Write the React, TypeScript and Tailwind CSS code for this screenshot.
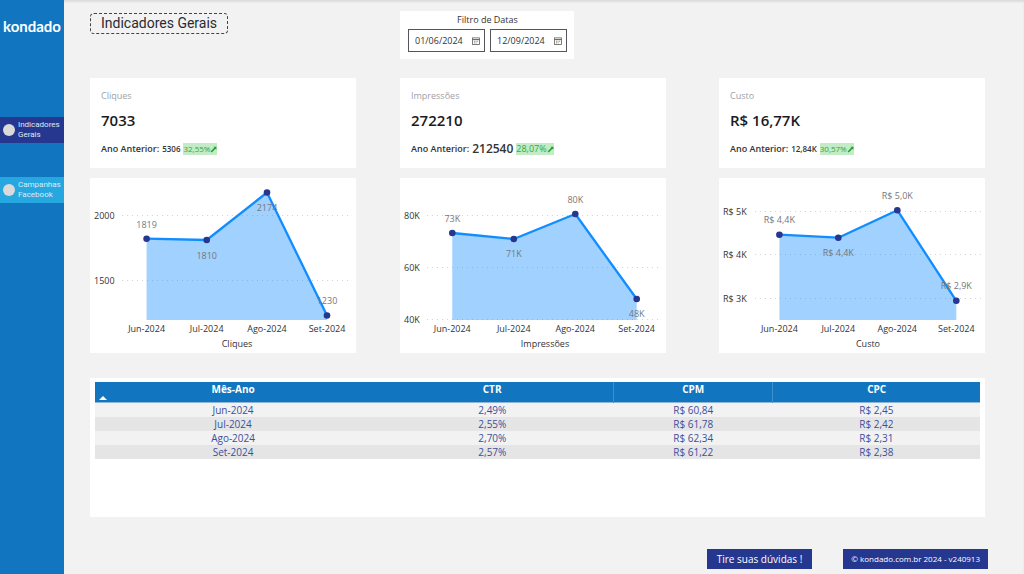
import React, { useState } from 'react';

interface Point {
  month: string;
  label: string;
  x: number;
  y: number;
  labelY: number;
}

interface Tick {
  label: string;
  y: number;
}

interface Metric {
  title: string;
  value: string;
  previous: string;
  previousLarge?: boolean;
  change: string;
  gridStart: number;
  titleX: number;
  ticks: Tick[];
  points: Point[];
}

const CHART_BASE = 142;

const metrics: Metric[] = [
  {
    title: 'Cliques',
    value: '7033',
    previous: '5306',
    change: '32,55%',
    gridStart: 32,
    titleX: 147,
    ticks: [
      { label: '2000', y: 37.5 },
      { label: '1500', y: 102.5 },
    ],
    points: [
      { month: 'Jun-2024', label: '1819', x: 56.6, y: 60.7, labelY: 50 },
      { month: 'Jul-2024', label: '1810', x: 116.7, y: 62, labelY: 81 },
      { month: 'Ago-2024', label: '2174', x: 177, y: 14.5, labelY: 33 },
      { month: 'Set-2024', label: '1230', x: 237, y: 137.5, labelY: 126 },
    ],
  },
  {
    title: 'Impressões',
    value: '272210',
    previous: '212540',
    previousLarge: true,
    change: '28,07%',
    gridStart: 27,
    titleX: 145,
    ticks: [
      { label: '80K', y: 37.5 },
      { label: '60K', y: 89.5 },
      { label: '40K', y: 141.5 },
    ],
    points: [
      { month: 'Jun-2024', label: '73K', x: 52.3, y: 55, labelY: 44 },
      { month: 'Jul-2024', label: '71K', x: 113.8, y: 61, labelY: 79 },
      { month: 'Ago-2024', label: '80K', x: 175.3, y: 36, labelY: 25 },
      { month: 'Set-2024', label: '48K', x: 236.7, y: 121, labelY: 139 },
    ],
  },
  {
    title: 'Custo',
    value: 'R$ 16,77K',
    previous: '12,84K',
    change: '30,57%',
    gridStart: 36,
    titleX: 149,
    ticks: [
      { label: 'R$ 5K', y: 33.5 },
      { label: 'R$ 4K', y: 76.5 },
      { label: 'R$ 3K', y: 120.5 },
    ],
    points: [
      { month: 'Jun-2024', label: 'R$ 4,4K', x: 60.4, y: 56.7, labelY: 45 },
      { month: 'Jul-2024', label: 'R$ 4,4K', x: 119.3, y: 59.7, labelY: 78 },
      { month: 'Ago-2024', label: 'R$ 5,0K', x: 178.3, y: 32.2, labelY: 21 },
      { month: 'Set-2024', label: 'R$ 2,9K', x: 237.3, y: 122.8, labelY: 111 },
    ],
  },
];

const rows = [
  ['Jun-2024', '2,49%', 'R$ 60,84', 'R$ 2,45'],
  ['Jul-2024', '2,55%', 'R$ 61,78', 'R$ 2,42'],
  ['Ago-2024', '2,70%', 'R$ 62,34', 'R$ 2,31'],
  ['Set-2024', '2,57%', 'R$ 61,22', 'R$ 2,38'],
];

const columnPadding = ['pr-11', 'pr-[53px]', ''];

const CalendarIcon: React.FC = () => (
  <svg viewBox="0 0 8 8" className="h-2 w-2 shrink-0" fill="none" stroke="#605e5c" strokeWidth="0.8">
    <rect x="0.5" y="0.9" width="7" height="6.6" />
    <path d="M0.5 2.6h7" strokeWidth="1" />
    <path d="M2 4.3h0.9M3.6 4.3h0.9M5.2 4.3h0.9M2 5.9h0.9M3.6 5.9h0.9" />
  </svg>
);

const DateField: React.FC<{ label: string; initial: string }> = ({ label, initial }) => {
  const [value, setValue] = useState(initial);
  return (
    <label className="flex h-[23px] flex-1 items-center border border-[#55555c] pl-1.5 pr-1">
      <input
        type="text"
        aria-label={label}
        value={value}
        onChange={(e) => setValue(e.target.value)}
        className="w-full min-w-0 bg-transparent text-[9px] text-[#333] outline-none"
      />
      <CalendarIcon />
    </label>
  );
};

const KpiCard: React.FC<{ metric: Metric }> = ({ metric }) => (
  <div className="h-[90px] bg-white px-[11px] pt-3">
    <h2 className="text-[9px] leading-3 text-[#a0a0a5]">{metric.title}</h2>
    <p className="mt-1.5 text-[15px] leading-6 font-semibold text-[#1b1b1f]">{metric.value}</p>
    <p className="mt-[9px] flex items-center gap-[3px] text-[9px] leading-4 whitespace-nowrap text-[#333]">
      <span className="font-semibold">Ano Anterior:</span>
      {metric.previousLarge ? (
        <span className="text-xs leading-4 font-semibold">{metric.previous}</span>
      ) : (
        <span className="text-[8px] font-semibold">{metric.previous}</span>
      )}
      <span
        className={`flex h-3 items-center bg-[#c3ebc5] text-[#33a83c] ${metric.previousLarge ? 'text-[9px]' : 'text-[8px]'}`}
      >
        {metric.change}
        <svg viewBox="0 0 7 7" className="h-[7px] w-[7px]" fill="#1fa02c">
          <path d="M0.6 5.4L4.4 1.6L3.4 0.8H6.4V3.8L5.5 2.8L1.7 6.5Z" />
        </svg>
      </span>
    </p>
  </div>
);

const AreaChart: React.FC<{ metric: Metric }> = ({ metric }) => {
  const { points, ticks } = metric;
  const line = points.map((p) => `${p.x},${p.y}`).join(' ');
  const area = `${points[0].x},${CHART_BASE} ${line} ${points[points.length - 1].x},${CHART_BASE}`;

  return (
    <div className="bg-white">
      <svg viewBox="0 0 266 175" className="block h-auto w-full" role="img" aria-label={metric.title}>
        {ticks.map((t) => (
          <g key={t.label}>
            <line
              x1={metric.gridStart}
              x2="262"
              y1={t.y}
              y2={t.y}
              stroke="#d4d4d4"
              strokeDasharray="1 4"
            />
            <text x="4" y={t.y + 3.5} className="fill-[#333] text-[9px]">{t.label}</text>
          </g>
        ))}
        <polygon points={area} fill="#118dff" fillOpacity="0.4" />
        <polyline points={line} fill="none" stroke="#118dff" strokeWidth="2.3" strokeLinejoin="round" />
        {points.map((p) => (
          <g key={p.month} textAnchor="middle">
            <text x={p.x} y={p.labelY} className="fill-[#77777a] text-[9px]">{p.label}</text>
            <circle cx={p.x} cy={p.y} r="3.3" fill="#25378f" />
            <text x={p.x} y="154" className="fill-[#333] text-[9px]">{p.month}</text>
          </g>
        ))}
        <text x={metric.titleX} y="169" textAnchor="middle" className="fill-[#333] text-[9px]">
          {metric.title}
        </text>
      </svg>
    </div>
  );
};

const NavItem: React.FC<{ lines: string[]; color: string }> = ({ lines, color }) => (
  <a
    href="#"
    className={`flex h-[26px] items-center gap-[3px] pl-[3px] font-[Roboto,sans-serif] text-[8px] leading-[10px] text-[#dfeaf6] ${color}`}
  >
    <span className="h-3 w-3 shrink-0 rounded-full bg-[#dadada]" />
    <span>
      {lines[0]}
      <br />
      {lines[1]}
    </span>
  </a>
);

const App: React.FC = () => {
  return (
    <div className="flex min-h-screen bg-[#f2f2f2] font-['Open_Sans','Noto_Sans',sans-serif] shadow-[inset_0_2px_2px_#dcdcdc]">
      <aside className="w-16 shrink-0 bg-[#1176bf]">
        <div className="pt-4 text-center font-[Lato,sans-serif] text-[15px] leading-5 font-bold text-white">
          kondado
        </div>
        <nav className="mt-[81px] flex flex-col gap-[34px]">
          <NavItem lines={['Indicadores', 'Gerais']} color="bg-[#26378f]" />
          <NavItem lines={['Campanhas', 'Facebook']} color="bg-[#26a7e0]" />
        </nav>
      </aside>

      <main className="flex min-w-0 flex-1 flex-col pt-[11px] pb-[5px] pl-[26px]">
        <div className="pr-[39px]">
          <header className="grid grid-cols-[310fr_319fr_266fr]">
            <div className="pt-0.5">
              <h1 className="w-fit rounded border border-dashed border-[#444] px-[10px] font-[Roboto,sans-serif] text-sm leading-[19px] text-[#2b2b33]">
                Indicadores Gerais
              </h1>
            </div>
            <div>
              <fieldset className="h-12 w-[174px] bg-white pt-[3px] pr-[7px] pl-2">
                <div className="text-center text-[9px] leading-3 text-[#333]">Filtro de Datas</div>
                <div className="mt-[3px] flex gap-[5px]">
                  <DateField label="Data inicial" initial="01/06/2024" />
                  <DateField label="Data final" initial="12/09/2024" />
                </div>
              </fieldset>
            </div>
          </header>

          <section className="mt-[19px] grid grid-cols-[310fr_319fr_266fr]">
            {metrics.map((m, i) => (
              <div key={m.title} className={`flex flex-col gap-2.5 ${columnPadding[i]}`}>
                <KpiCard metric={m} />
                <AreaChart metric={m} />
              </div>
            ))}
          </section>

          <section className="mt-[25px] min-h-[139px] bg-white px-[5px] pt-1">
            <table className="w-full table-fixed border-collapse text-center text-[10px] leading-[14px]">
              <colgroup>
                <col className="w-[31.2%]" />
                <col className="w-[27.4%]" />
                <col className="w-[18%]" />
                <col className="w-[23.4%]" />
              </colgroup>
              <thead>
                <tr className="h-5 border-b border-[#8fb6d6] bg-[#1176bf] align-top text-white">
                  <th className="relative p-0 font-bold">
                    Mês-Ano
                    <svg viewBox="0 0 8 4" className="absolute bottom-0.5 left-1 h-1 w-2" fill="#fff">
                      <path d="M0 4L4 0L8 4Z" />
                    </svg>
                  </th>
                  <th className="p-0 font-bold">CTR</th>
                  <th className="border-l border-[#3f8fca] p-0 font-bold">CPM</th>
                  <th className="border-l border-[#3f8fca] p-0 font-bold">CPC</th>
                </tr>
              </thead>
              <tbody className="text-[#3c4f9b]">
                {rows.map((row) => (
                  <tr key={row[0]} className="odd:bg-[#f2f2f2] even:bg-[#e5e5e5]">
                    {row.map((cell) => (
                      <td key={cell} className="p-0">{cell}</td>
                    ))}
                  </tr>
                ))}
              </tbody>
            </table>
          </section>
        </div>

        <footer className="mt-auto flex justify-end gap-[31px] pr-9 text-white">
          <button type="button" className="h-5 bg-[#26378f] px-2.5 text-[10px] leading-5">
            Tire suas dúvidas !
          </button>
          <a href="#" className="h-5 bg-[#26378f] px-2 text-[8px] leading-5 font-medium">
            © kondado.com.br 2024 - v240913
          </a>
        </footer>
      </main>
    </div>
  );
};

export default App;
